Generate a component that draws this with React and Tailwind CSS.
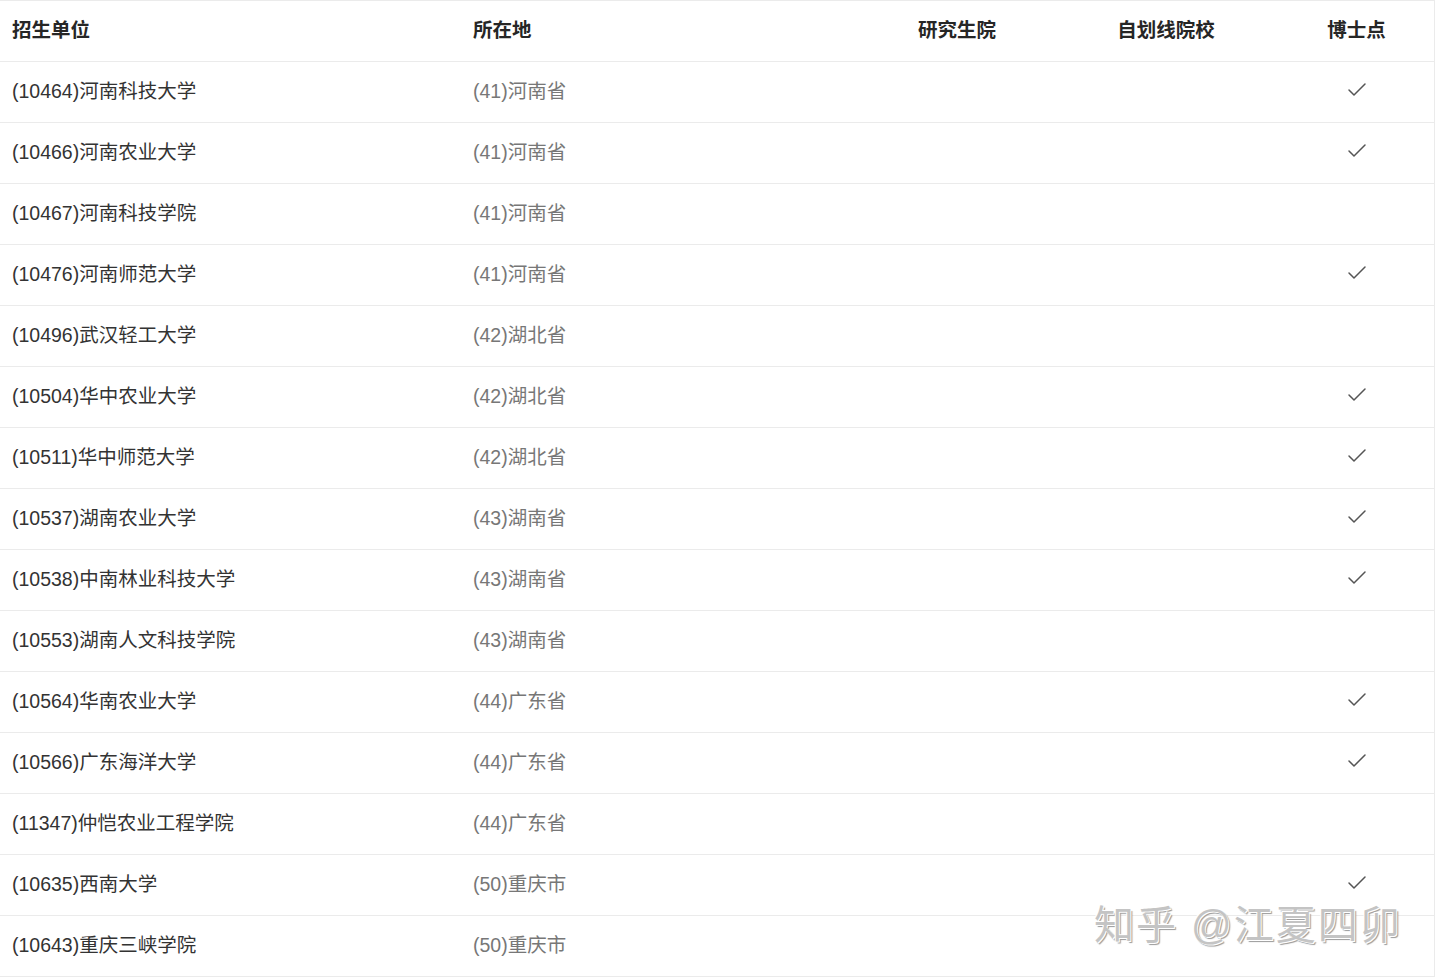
import { Check } from 'lucide-react'

const rows = [
  ['(10464)河南科技大学', '(41)河南省', true],
  ['(10466)河南农业大学', '(41)河南省', true],
  ['(10467)河南科技学院', '(41)河南省', false],
  ['(10476)河南师范大学', '(41)河南省', true],
  ['(10496)武汉轻工大学', '(42)湖北省', false],
  ['(10504)华中农业大学', '(42)湖北省', true],
  ['(10511)华中师范大学', '(42)湖北省', true],
  ['(10537)湖南农业大学', '(43)湖南省', true],
  ['(10538)中南林业科技大学', '(43)湖南省', true],
  ['(10553)湖南人文科技学院', '(43)湖南省', false],
  ['(10564)华南农业大学', '(44)广东省', true],
  ['(10566)广东海洋大学', '(44)广东省', true],
  ['(11347)仲恺农业工程学院', '(44)广东省', false],
  ['(10635)西南大学', '(50)重庆市', true],
  ['(10643)重庆三峡学院', '(50)重庆市', false],
]

const font = { fontFamily: '"Liberation Sans", "Noto Sans CJK SC", sans-serif' }

const Row = ({ children, header }) => (
  <div className={`grid grid-cols-[461px_400px_192px_226px_155px] h-[61px] items-center border-b border-[#ebebeb] ${header ? 'font-bold text-[#262626]' : ''}`}>
    {children}
  </div>
)

export default function App() {
  return (
    <div className="bg-white w-[1440px] h-[978px] overflow-hidden" style={font}>
      <div className="relative w-[1435px] border-t border-r border-[#ebebeb] text-[19.5px]">
        <Row header>
          <div className="pl-3">招生单位</div>
          <div className="pl-3">所在地</div>
          <div className="text-center">研究生院</div>
          <div className="text-center">自划线院校</div>
          <div className="text-center">博士点</div>
        </Row>
        {rows.map(([name, loc, phd]) => (
          <Row key={name}>
            <div className="pl-3 text-[#333]">{name}</div>
            <div className="pl-3 text-[#777]">{loc}</div>
            <div />
            <div />
            <div className="flex justify-center -mt-1">
              {phd && <Check className="w-[24px] h-[24px] text-[#555]" strokeWidth={1.5} />}
            </div>
          </Row>
        ))}
        <div
          className="absolute left-[1094px] top-[894px] text-[40px] text-[#c4c4c4] tracking-[2px] pointer-events-none"
          style={{ textShadow: '1px 1px 0 #fff, -1px -1px 0 #fff, 2px 2px 1px #999' }}
        >
          知乎 @江夏四卯
        </div>
      </div>
    </div>
  )
}
